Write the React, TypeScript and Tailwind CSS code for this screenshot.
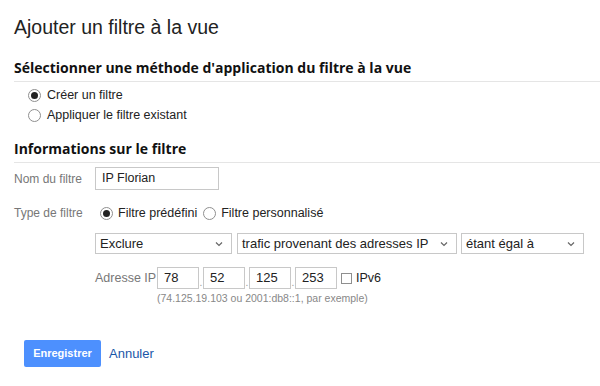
import React from "react";

function Radio({ checked }: { checked?: boolean }) {
  return (
    <span className="inline-flex h-[13px] w-[13px] shrink-0 items-center justify-center rounded-full border border-[#8f8f8f] bg-white">
      {checked && <span className="h-[7px] w-[7px] rounded-full bg-[#222]" />}
    </span>
  );
}

function Select({ label, width }: { label: string; width: string }) {
  return (
    <div className={`flex h-[21px] shrink-0 items-center justify-between border border-[#c8c8c8] bg-white pl-[4px] pr-[8px] text-[13px] text-[#222] ${width}`}>
      <span className="whitespace-nowrap">{label}</span>
      <svg width="8" height="6" viewBox="0 0 8 6" className="text-[#666]">
        <path d="M1 1.5 L4 4.5 L7 1.5" fill="none" stroke="currentColor" strokeWidth="1.2" />
      </svg>
    </div>
  );
}

function IpBox({ value }: { value: string }) {
  return (
    <div className="h-[22px] w-[42px] shrink-0 border border-[#c8c8c8] bg-white px-[6px] pt-[2px] text-[13px] leading-[16px] text-[#222]">
      {value}
    </div>
  );
}

function Dot() {
  return <span className="w-[4px] text-center text-[10px] leading-[12px] text-[#999]">.</span>;
}

export default function App() {
  return (
    <div className="h-[386px] w-[600px] overflow-hidden bg-white font-['Liberation_Sans',Arial,sans-serif] text-[12.5px] text-[#222]">
      <h1 className="pl-[14px] pt-[15px] text-[19.5px] leading-[24px] text-[#222]">Ajouter un filtre à la vue</h1>

      {/* méthode */}
      <div className="mt-[20px] ml-[14px]">
        <h2 className="border-b border-[#e5e5e5] pb-[4px] font-['Open_Sans',sans-serif] text-[14px] font-bold leading-[18px] text-[#111]">
          Sélectionner une méthode d'application du filtre à la vue
        </h2>
        <div className="mt-[6px] flex flex-col gap-[6px] pl-[14px]">
          <label className="flex h-[14px] items-center gap-[6px]">
            <Radio checked />
            <span>Créer un filtre</span>
          </label>
          <label className="flex h-[14px] items-center gap-[6px]">
            <Radio />
            <span>Appliquer le filtre existant</span>
          </label>
        </div>
      </div>

      {/* informations */}
      <div className="mt-[18px] ml-[14px]">
        <h2 className="border-b border-[#e5e5e5] pb-[4px] font-['Open_Sans',sans-serif] text-[14px] font-bold leading-[18px] text-[#111]">
          Informations sur le filtre
        </h2>

        <div className="mt-[4px] flex items-center">
          <span className="w-[81px] shrink-0 text-[12px] text-[#777]">Nom du filtre</span>
          <div className="h-[23px] w-[124px] border border-[#c8c8c8] px-[6px] text-[12.5px] leading-[21px] text-[#222]">IP Florian</div>
        </div>

        <div className="mt-[13px] flex h-[20px] items-center">
          <span className="w-[86px] shrink-0 text-[12px] text-[#777]">Type de filtre</span>
          <label className="flex items-center gap-[5px]">
            <Radio checked />
            <span>Filtre prédéfini</span>
          </label>
          <label className="ml-[6px] flex items-center gap-[5px]">
            <Radio />
            <span>Filtre personnalisé</span>
          </label>
        </div>

        <div className="ml-[81px] mt-[10px] flex">
          <Select label="Exclure" width="w-[137px]" />
          <Select label="trafic provenant des adresses IP" width="ml-[5px] w-[220px]" />
          <Select label="étant égal à" width="ml-[4px] w-[123px]" />
        </div>

        <div className="ml-[81px] mt-[13px] flex items-center">
          <span className="w-[62px] shrink-0 whitespace-nowrap text-[12.5px] text-[#777]">Adresse IP</span>
          <div className="flex items-end">
            <IpBox value="78" />
            <Dot />
            <IpBox value="52" />
            <Dot />
            <IpBox value="125" />
            <Dot />
            <IpBox value="253" />
          </div>
          <label className="ml-[4px] flex items-center gap-[4px]">
            <span className="h-[11px] w-[11px] border border-[#8f8f8f] bg-white" />
            <span>IPv6</span>
          </label>
        </div>
        <p className="ml-[143px] mt-[3px] text-[10.5px] leading-[13px] text-[#888]">(74.125.19.103 ou 2001:db8::1, par exemple)</p>
      </div>

      <div className="ml-[24px] mt-[35px] flex items-center gap-[8px]">
        <button className="h-[27px] w-[77px] rounded-[2px] bg-[#4d90fe] text-[11px] font-bold text-white">Enregistrer</button>
        <span className="text-[13px] text-[#1a56a8]">Annuler</span>
      </div>
    </div>
  );
}
